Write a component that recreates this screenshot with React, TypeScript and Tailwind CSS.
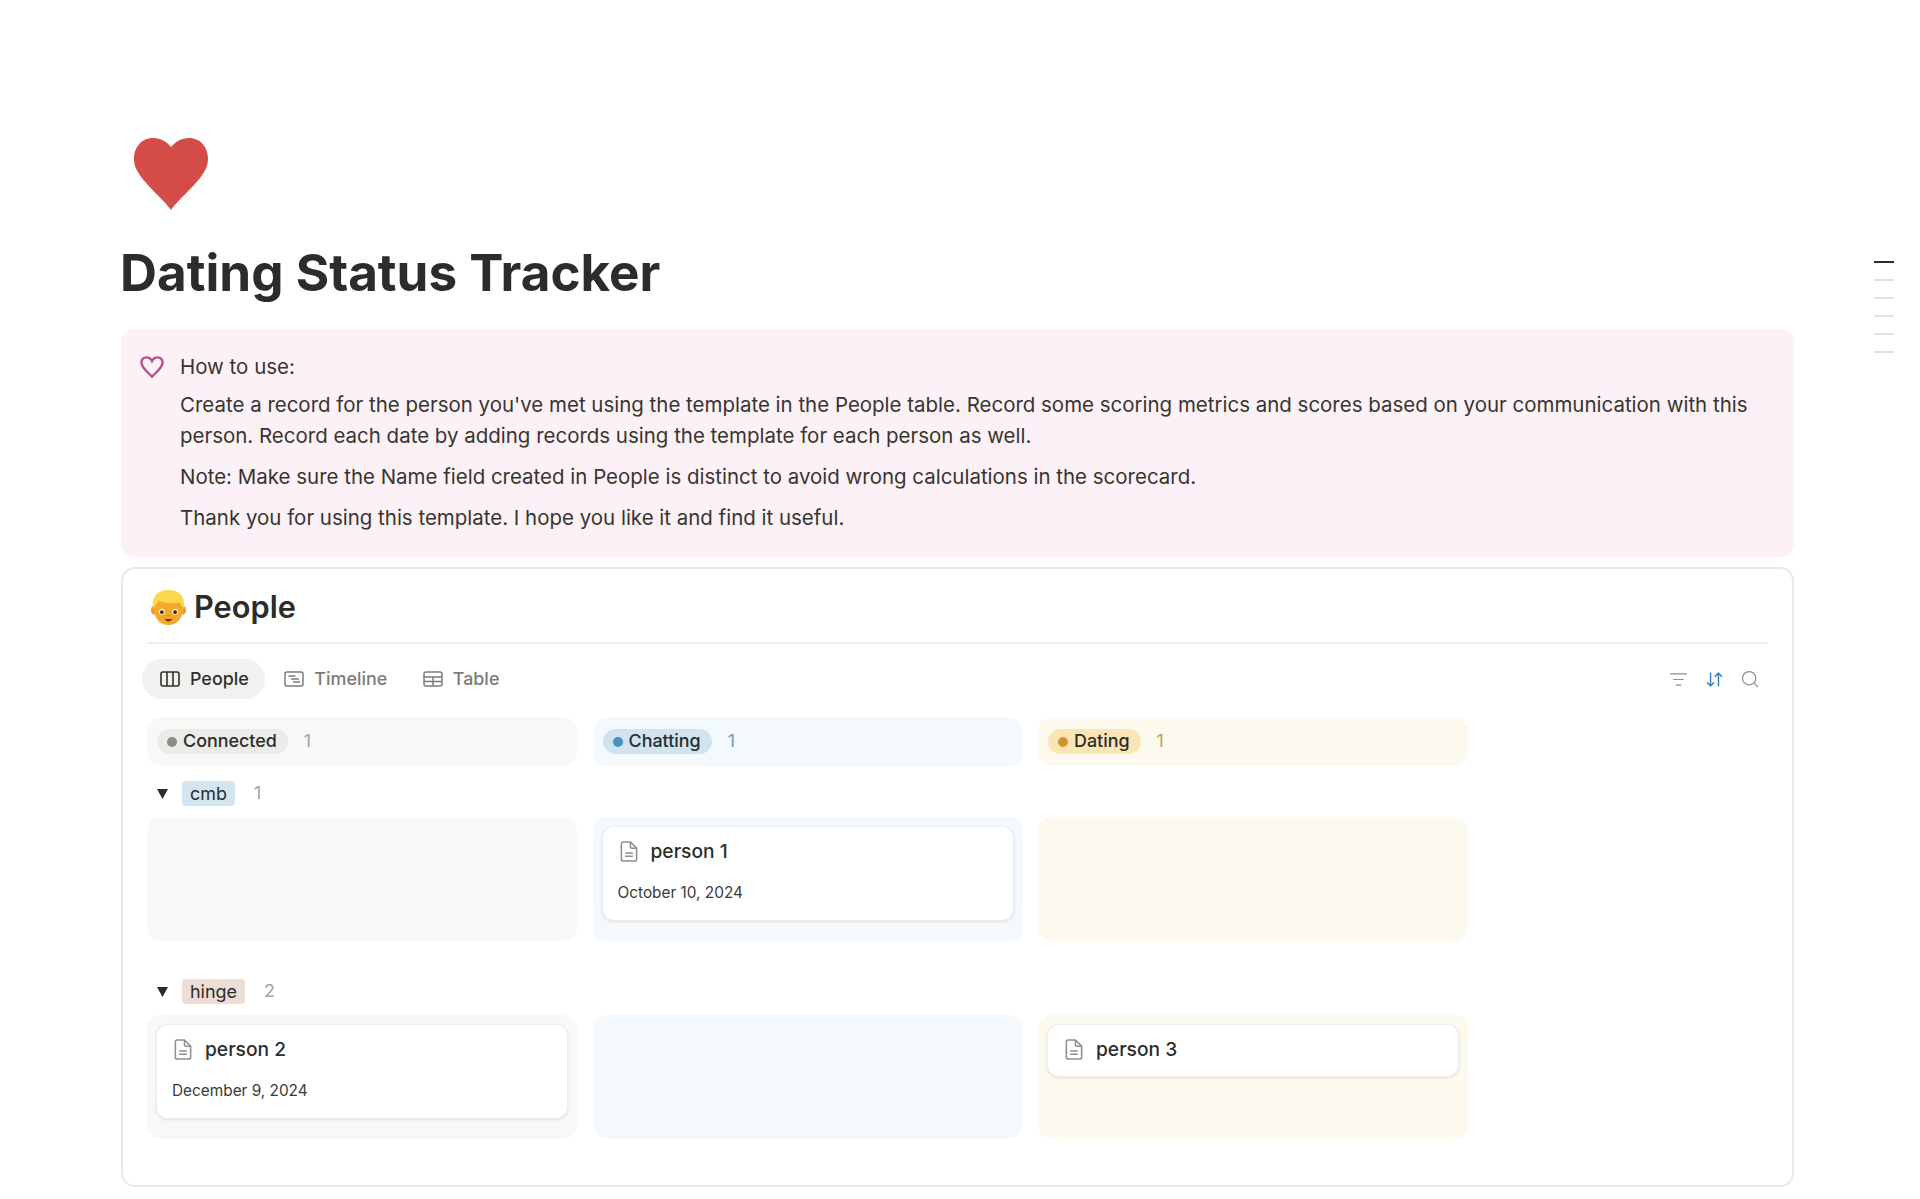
import React from "react";
import { ArrowDownUp, ListFilter, Search } from "lucide-react";

const tabs = [
  { label: "People", active: true },
  { label: "Timeline", active: false },
  { label: "Table", active: false },
];

const columns = [
  { title: "Connected", bg: "bg-[#f8f8f6]", pill: "bg-[#ebebe9]", dot: "bg-[#8f8d89]", count: "text-[#a5a4a1]" },
  { title: "Chatting", bg: "bg-[#f4f9fd]", pill: "bg-[#cfe3f0]", dot: "bg-[#4a90bd]", count: "text-[#6f9fbb]" },
  { title: "Dating", bg: "bg-[#fcf9ee]", pill: "bg-[#fae6b5]", dot: "bg-[#d1942a]", count: "text-[#b9a269]" },
];

function TabIcon({ name }: { name: string }) {
  if (name === "People") {
    return (
      <svg width="20" height="16" viewBox="0 0 20 16" fill="none" stroke="currentColor" strokeWidth="1.6">
        <rect x="1" y="1" width="18" height="14" rx="2" />
        <path d="M7 1v14M13 1v14" />
      </svg>
    );
  }
  if (name === "Timeline") {
    return (
      <svg width="20" height="16" viewBox="0 0 20 16" fill="none" stroke="currentColor" strokeWidth="1.5">
        <rect x="1" y="1" width="18" height="14" rx="2" />
        <path d="M4.5 5h7M7 8h8M9 11h7" />
      </svg>
    );
  }
  return (
    <svg width="20" height="16" viewBox="0 0 20 16" fill="none" stroke="currentColor" strokeWidth="1.5">
      <rect x="1" y="1" width="18" height="14" rx="2" />
      <path d="M1 6h18M1 10.5h18M10 6v9" />
    </svg>
  );
}

function PageIcon() {
  return (
    <svg width="18" height="21" viewBox="0 0 18 22" fill="none" stroke="#8f8e8b" strokeWidth="1.6" className="shrink-0 ml-[2px]">
      <path d="M3 1h7.5L17 7.5V19a2 2 0 0 1-2 2H3a2 2 0 0 1-2-2V3a2 2 0 0 1 2-2Z" />
      <path d="M10.5 1v5a1.5 1.5 0 0 0 1.5 1.5h5" />
      <path d="M5 12.5h8M5 16h8" />
    </svg>
  );
}

function BoyEmoji() {
  return (
    <svg width="35" height="35" viewBox="0 0 38 38" className="ml-[4px]">
      <ellipse cx="3.500" cy="22" rx="3.500" ry="4.500" fill="#ec9a22" />
      <ellipse cx="34.500" cy="22" rx="3.500" ry="4.500" fill="#ec9a22" />
      <ellipse cx="19" cy="22" rx="15.500" ry="16" fill="#f5a92c" />
      <path d="M2.500 21C0 6 8 0 19 0s19 6 16.500 21c-1-3.500-2.500-6-4.500-7.500-7 1.500-15 1-22-1.500-2.500 2.500-5 5.500-6.500 9Z" fill="#fcd84e" />
      <ellipse cx="11.800" cy="23.500" rx="3.200" ry="3.100" fill="#fdeccb" />
      <ellipse cx="26.200" cy="23.500" rx="3.200" ry="3.100" fill="#fdeccb" />
      <circle cx="11.800" cy="24" r="2" fill="#33241a" />
      <circle cx="26.200" cy="24" r="2" fill="#33241a" />
      <path d="M16.500 27.500c1.500.8 3.500.8 5 0" fill="none" stroke="#d9851c" strokeWidth="1.200" />
      <path d="M14.500 31c3 .8 6 .8 9 0-.8 2.300-2.700 3.300-4.500 3.300s-3.700-1-4.500-3.300Z" fill="#7a3b16" />
    </svg>
  );
}

function GroupLabel({ name, tag, count }: { name: string; tag: string; count: number }) {
  return (
    <div className="flex items-center h-[29px] pl-[10px]">
      <svg width="11" height="10" viewBox="0 0 11 10" className="shrink-0">
        <path d="M0 0h11L5.500 10Z" fill="#2c2c2b" />
      </svg>
      <span className={`ml-[14px] h-[25px] px-2 rounded-[4px] text-[17.920px] leading-[25px] text-[#2c2c2b] ${tag}`}>
        {name}
      </span>
      <span className="ml-[19px] text-[17.920px] text-[#a5a4a1]">{count}</span>
    </div>
  );
}

function Card({ name, date }: { name: string; date?: string }) {
  return (
    <div
      className={`bg-white rounded-[12px] border border-[#eeeeec] shadow-[0_1px_3px_rgba(0,0,0,0.1)] px-[15px] pt-[9px] ${
        date ? "pb-[15px]" : "pb-[12px]"
      }`}
    >
      <div className="flex items-center gap-[13px] h-[30px] text-[19.200px] font-medium text-[#2c2c2b]">
        <PageIcon />
        <span>{name}</span>
      </div>
      {date && <div className="mt-[15px] text-[15.360px] leading-[24px] text-[#3a3a38]">{date}</div>}
    </div>
  );
}

function Row({ items }: { items: (React.ReactNode | null)[] }) {
  return (
    <div className="flex gap-[15.500px] mt-[9px]">
      {columns.map((c, i) => (
        <div key={c.title} className={`w-[430px] h-[124px] rounded-[14px] p-[9px] ${c.bg}`}>
          {items[i]}
        </div>
      ))}
    </div>
  );
}

export default function App() {
  return (
    <div className="relative h-[1199px] overflow-hidden bg-white text-[#2c2c2b] font-['Inter',sans-serif]">
      <div className="absolute right-[26px] top-[261px] flex flex-col gap-[16px] w-[20px]">
        <div className="h-[2px] bg-[#2c2c2b]" />
        <div className="h-[2px] bg-[#e3e3e1]" />
        <div className="h-[2px] bg-[#e3e3e1]" />
        <div className="h-[2px] bg-[#e3e3e1]" />
        <div className="h-[2px] bg-[#e3e3e1]" />
        <div className="h-[2px] bg-[#e3e3e1]" />
      </div>

      <div className="w-[1673px] ml-[121px] pt-[138px]">
        <svg width="76" height="72" viewBox="0 0 76 72" className="ml-[12px] block">
          <path
            d="M38 72C28 58 8 44 2 28-2 14 6 0 20 0c8 0 14 4 18 9C42 4 48 0 56 0c14 0 22 14 18 28C68 44 48 58 38 72Z"
            fill="#d44c47"
          />
        </svg>

        <h1 className="mt-[32px] -ml-px text-[51.200px] leading-[60px] font-bold text-[#2c2c2b]">
          Dating Status Tracker
        </h1>

        <div className="mt-[27px] h-[228px] flex rounded-[14px] bg-[#fcf1f6] pl-[19px] pt-[22px] pr-[40px]">
          <svg width="24" height="22" viewBox="0 0 26 24" fill="none" stroke="#b5508f" strokeWidth="2.600" className="shrink-0 mt-[5px]">
            <path d="M13 22.500C9 18 2 13.500 1.500 7.500 1.200 4 3.800 1.500 7 1.500c2.800 0 4.800 1.500 6 4 1.200-2.500 3.200-4 6-4 3.200 0 5.800 2.500 5.500 6C24 13.500 17 18 13 22.500Z" />
          </svg>
          <div className="ml-[16px] text-[20.480px] leading-[31px] text-[#37352f]">
            <p>How to use:</p>
            <p className="mt-[7px]">
              Create a record for the person you've met using the template in the People table. Record some scoring metrics and scores based on your communication with this person. Record each date by adding records using the template for each person as well.
            </p>
            <p className="mt-[10px]">
              Note: Make sure the Name field created in People is distinct to avoid wrong calculations in the scorecard.
            </p>
            <p className="mt-[10px]">Thank you for using this template. I hope you like it and find it useful.</p>
          </div>
        </div>

        <div className="mt-[10px] h-[620px] rounded-[14px] border-2 border-[#e9e9e7] px-[24px]">
          <div className="flex items-center gap-[8px] h-[75px] pt-[4px] border-b-2 border-[#eeeeec]">
            <BoyEmoji />
            <span className="text-[30.720px] font-semibold">People</span>
          </div>

          <div className="flex items-center justify-between h-[40px] mt-[15px] pr-[8px]">
            <div className="flex items-center gap-[1.500px] -ml-[5px]">
              {tabs.map((t) => (
                <div
                  key={t.label}
                  className={`flex items-center gap-[10px] h-[40px] pl-[18px] pr-[16px] rounded-full text-[17.920px] font-medium ${
                    t.active ? "bg-[#f1f1ef] text-[#32302c]" : "text-[#7d7c78]"
                  }`}
                >
                  <TabIcon name={t.label} />
                  <span>{t.label}</span>
                </div>
              ))}
            </div>
            <div className="flex items-center gap-[16.500px]">
              <ListFilter size={19} strokeWidth={1.5} className="text-[#8f8e8b]" />
              <ArrowDownUp size={19} strokeWidth={1.8} className="text-[#2f7fc1]" />
              <Search size={20} strokeWidth={1.5} className="text-[#8f8e8b]" />
            </div>
          </div>

          <div className="flex gap-[15.500px] mt-[18px]">
            {columns.map((c) => (
              <div key={c.title} className={`flex items-center w-[430px] h-[49px] rounded-[14px] pl-[10px] ${c.bg}`}>
                <span className={`flex items-center gap-[6px] h-[25px] pl-[10px] pr-[11px] rounded-full text-[17.920px] font-medium text-[#2c2c2b] ${c.pill}`}>
                  <span className={`w-[10px] h-[10px] rounded-full ${c.dot}`} />
                  {c.title}
                </span>
                <span className={`ml-[16px] text-[17.920px] ${c.count}`}>1</span>
              </div>
            ))}
          </div>

          <div className="mt-[13px]">
            <GroupLabel name="cmb" tag="bg-[#d3e5f1]" count={1} />
            <Row items={[null, <Card name="person 1" date="October 10, 2024" />, null]} />
          </div>
          <div className="mt-[36px]">
            <GroupLabel name="hinge" tag="bg-[#eedcd6]" count={2} />
            <Row items={[<Card name="person 2" date="December 9, 2024" />, null, <Card name="person 3" />]} />
          </div>
        </div>
      </div>
    </div>
  );
}
